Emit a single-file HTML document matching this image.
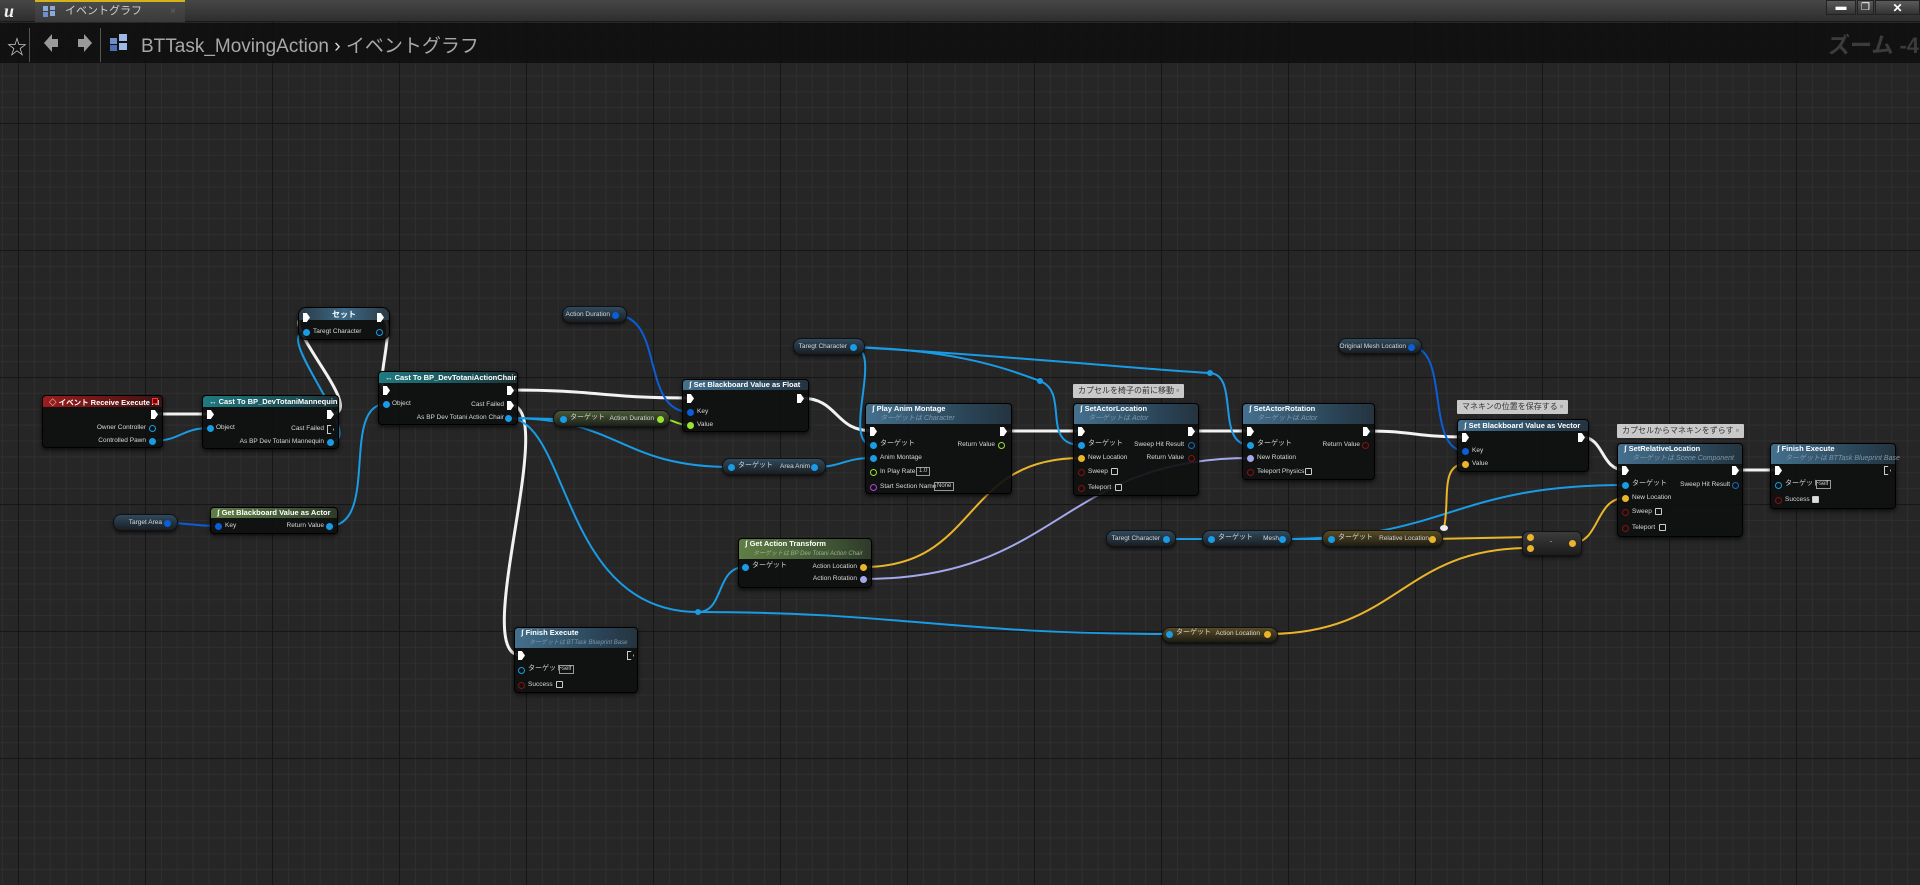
<!DOCTYPE html>
<html><head><meta charset="utf-8">
<style>
*{margin:0;padding:0;box-sizing:border-box}
body{width:1920px;height:885px;overflow:hidden;background:#262626;font-family:"Liberation Sans","Noto Sans CJK JP",sans-serif;position:relative;color:#ddd}
#grid{position:absolute;left:0;top:0;width:1920px;height:885px;
background-image:
linear-gradient(to right,#161616 1px,transparent 1px),
linear-gradient(to bottom,#161616 1px,transparent 1px),
linear-gradient(to right,#2f2f2f 1px,transparent 1px),
linear-gradient(to bottom,#2f2f2f 1px,transparent 1px);
background-size:127px 127px,127px 127px,15.875px 15.875px,15.875px 15.875px;
background-position:18px 123px,18px 123px,18px 123px,18px 123px}
#tabbar{position:absolute;left:0;top:0;width:1920px;height:22px;background:linear-gradient(#474747,#2e2e2e);border-bottom:1px solid #1a1a1a}
#tab{position:absolute;left:35px;top:0;width:150px;height:22px;background:linear-gradient(#4a4a4a,#3a3a3a);border-top:2px solid #d4b21a;color:#cfcfcf;font-size:11px;line-height:19px;padding-left:30px}
#toolbar{position:absolute;left:0;top:23px;width:1920px;height:40px;background:rgba(14,14,14,.85)}
.node{position:absolute;background:rgba(14,16,16,.92);border:1px solid #000;border-radius:4px;box-shadow:0 2px 4px rgba(0,0,0,.7)}
.hd{position:absolute;left:0;top:0;right:0;border-radius:3px 3px 0 0;color:#fff;font-size:8px;font-weight:bold;padding:2px 0 0 6px;white-space:nowrap}
.hb{background:linear-gradient(90deg,#44708e,#2a4456 70%,#24343f)}
.ht{background:linear-gradient(90deg,#1f7a80,#1b4c52 70%,#1d3033)}
.hr{background:linear-gradient(90deg,#9b1d1d,#5b1414 70%,#3a1414)}
.hg{background:linear-gradient(90deg,#5f7e45,#3e5434 70%,#2f3a2a)}
.sub{font-style:italic;font-weight:normal;color:#7d97aa;font-size:7px;padding-left:8px}
.pill{position:absolute;border-radius:8px;background:linear-gradient(#3c3c3c,#1c1c1c);border:1px solid #111;box-shadow:0 2px 3px rgba(0,0,0,.6)}
.pb{background:linear-gradient(#2f4a5e,#1a1e22)}
.pg{background:linear-gradient(#4a5a38,#1c2018)}
.py{background:linear-gradient(#5a4d24,#1e1c16)}
.l{position:absolute;font-size:6.5px;color:#d8d8d8;white-space:nowrap;line-height:8px}
.r{text-align:right}
.d{position:absolute;width:7px;height:7px;border-radius:50%}
.h{position:absolute;width:7px;height:7px;border-radius:50%;border:1.5px solid}
.x{position:absolute;width:7px;height:9px;background:#fff;clip-path:polygon(0 0,55% 0,100% 50%,55% 100%,0 100%)}
.xo{position:absolute;width:7px;height:9px;border:1px solid #ccc;clip-path:polygon(0 0,55% 0,100% 50%,55% 100%,0 100%);background:transparent}
.cb{position:absolute;width:7px;height:7px;border:1px solid #ccc;border-radius:1px}
.in{position:absolute;height:9px;border:1px solid #999;font-size:6px;color:#ccc;padding:0 2px;line-height:7px}
.cm{position:absolute;background:#c9c9c9;color:#333;font-size:8px;padding:1px 5px;height:14px;line-height:12px;border-radius:1px;white-space:nowrap}
</style></head><body>
<div id="grid"></div>

<svg style="position:absolute;left:0;top:0" width="1920" height="885" fill="none" stroke-linecap="round">
<g stroke="#f2f2f2" stroke-width="3">
<path d="M155,414 L210,414"/>
<path d="M330,414 C372,414 272,317 306,317"/>
<path d="M380,317 C400,317 372,390 386,390"/>
<path d="M510,390 C600,390 600,398 690,398"/>
<path d="M510,405 C560,405 470,655 520,655"/>
<path d="M800,398 C840,398 833,431 873,431"/>
<path d="M1003,431 L1081,431"/>
<path d="M1191,431 L1250,431"/>
<path d="M1366,431 C1415,431 1415,437 1465,437"/>
<path d="M1581,437 C1605,437 1600,470 1625,470"/>
<path d="M1735,470 L1778,470"/>
</g>
<g stroke="#1a9be6" stroke-width="2">
<path d="M152,441 C181,441 181,428 210,428"/>
<path d="M330,442 C370,442 270,332 306,332"/>
<path d="M329,526 C380,526 340,404 386,404"/>
<path d="M508,418 C535,418 536,419 563,419"/>
<path d="M508,418 C620,418 620,467 731,467"/>
<path d="M508,418 C570,418 560,612 698,612"/>
<path d="M698,612 C725,612 715,567 745,567"/>
<path d="M698,612 C900,612 950,634 1169,634"/>
<path d="M853,347 C885,347 840,445 873,445"/>
<path d="M853,347 C960,350 1010,370 1040,381 C1070,392 1040,445 1081,445"/>
<path d="M853,347 C1000,355 1150,370 1210,373 C1240,375 1215,445 1250,445"/>
<path d="M814,467 C843,467 843,458 873,458"/>
<path d="M1166,539 L1211,539"/>
<path d="M1282,539 L1331,539"/>
<path d="M1282,539 C1450,539 1450,485 1625,485"/>
</g>
<g stroke="#0b5ed8" stroke-width="2">
<path d="M167,523 C192,523 192,526 218,526"/>
<path d="M615,315 C665,315 640,412 690,412"/>
<path d="M1411,347 C1450,347 1425,451 1465,451"/>
</g>
<path stroke="#9be130" stroke-width="2" d="M660,419 C675,419 675,425 690,425"/>
<g stroke="#eab52a" stroke-width="2">
<path d="M863,567 C980,567 960,458 1081,458"/>
<path d="M1432,539 L1530,537"/>
<path d="M1444,528 C1450,500 1440,464 1465,464"/>
<path d="M1267,634 C1400,634 1400,548 1530,548"/>
<path d="M1572,543 C1600,543 1595,498 1625,498"/>
</g>
<path stroke="#a4a8ec" stroke-width="2" d="M863,579 C1060,579 1060,458 1250,458"/>
<circle cx="698" cy="612" r="3" fill="#1a9be6"/>
<circle cx="1040" cy="381" r="3" fill="#1a9be6"/>
<circle cx="1210" cy="373" r="3" fill="#1a9be6"/>
<ellipse cx="1444" cy="528" rx="4" ry="3" fill="#eee"/>
</svg>

<!-- top bars -->
<div id="tabbar"></div>
<div style="position:absolute;left:4px;top:1px;font:bold italic 18px 'Liberation Serif',serif;color:#eee">u</div>
<div id="tab"><svg style="position:absolute;left:8px;top:4px" width="14" height="12"><rect x="0" y="0" width="5" height="5" fill="#8aa8d8"/><rect x="7" y="0" width="5" height="4" fill="#8aa8d8"/><rect x="0" y="6" width="5" height="5" fill="#6f8fcb"/><rect x="7" y="5" width="5" height="5" fill="#8aa8d8"/></svg>イベントグラフ<span style="position:absolute;left:135px;color:#666;font-size:10px">×</span></div>
<div style="position:absolute;left:1826px;top:0;width:30px;height:15px;background:linear-gradient(#5a5a5a,#333);border:1px solid #222;color:#fff;font-size:11px;text-align:center;line-height:12px">▬</div>
<div style="position:absolute;left:1857px;top:0;width:17px;height:15px;background:linear-gradient(#5a5a5a,#333);border:1px solid #222;color:#fff;font-size:10px;text-align:center;line-height:13px">❐</div>
<div style="position:absolute;left:1875px;top:0;width:45px;height:15px;background:linear-gradient(#5a5a5a,#333);border:1px solid #222;color:#fff;font-size:12px;font-weight:bold;text-align:center;line-height:14px">✕</div>
<div id="toolbar"></div>
<div style="position:absolute;left:7px;top:31px;font-size:20px;color:#ccc">☆</div>
<div style="position:absolute;left:29px;top:28px;width:1px;height:34px;background:#555"></div>
<svg style="position:absolute;left:44px;top:34px" width="60" height="20"><path d="M0,9 L8,0 L8,5 L14,5 L14,13 L8,13 L8,18 Z" fill="#9a9a9a"/><path d="M48,9 L40,0 L40,5 L34,5 L34,13 L40,13 L40,18 Z" fill="#9a9a9a"/></svg>
<div style="position:absolute;left:100px;top:28px;width:1px;height:34px;background:#555"></div>
<svg style="position:absolute;left:110px;top:34px" width="20" height="17"><rect x="0" y="4" width="7" height="6" fill="#6f8fcb"/><rect x="9" y="0" width="8" height="7" fill="#9fb8e8"/><rect x="0" y="11" width="7" height="6" fill="#4d6fb8"/><rect x="9" y="9" width="8" height="7" fill="#9fb8e8"/></svg>
<div style="position:absolute;left:141px;top:31px;font-size:19px;color:#a8a8a8;white-space:nowrap">BTTask_MovingAction <span style="color:#ddd">›</span> イベントグラフ</div>
<div style="position:absolute;left:1828px;top:28px;font-size:22px;font-weight:bold;color:#3c3c3c;white-space:nowrap">ズーム -4</div>

<!-- Event node -->
<div class="node" style="left:42px;top:395px;width:121px;height:53px"><div class="hd hr" style="height:11px;font-size:7.5px;padding-top:1px">◇ イベント Receive Execute AI<span style="position:absolute;right:4px;top:2px;width:6px;height:6px;border:1px solid #f33;background:#600"></span></div></div>
<div class="x" style="left:151px;top:410px"></div>
<div class="l r" style="right:1774px;top:424px">Owner Controller</div><div class="h" style="left:149px;top:425px;border-color:#1a9be6"></div>
<div class="l r" style="right:1774px;top:437px">Controlled Pawn</div><div class="d" style="left:149px;top:438px;background:#1a9be6"></div>

<!-- Cast to mannequin -->
<div class="node" style="left:202px;top:395px;width:137px;height:54px"><div class="hd ht" style="height:11px;font-size:7.5px;padding-top:1px">↔ Cast To BP_DevTotaniMannequin</div></div>
<div class="x" style="left:207px;top:410px"></div><div class="x" style="left:327px;top:410px"></div>
<div class="d" style="left:207px;top:425px;background:#1a9be6"></div><div class="l" style="left:216px;top:424px">Object</div>
<div class="l r" style="right:1596px;top:425px">Cast Failed</div><div class="xo" style="left:327px;top:425px"></div>
<div class="l r" style="right:1596px;top:438px">As BP Dev Totani Mannequin</div><div class="d" style="left:327px;top:439px;background:#1a9be6"></div>

<!-- Set node -->
<div class="node" style="left:298px;top:307px;width:92px;height:33px;border-radius:8px"><div class="hd" style="height:12px;background:linear-gradient(90deg,#2a3a44,#3c6a88,#2a3a44);border-radius:7px 7px 0 0;text-align:center;padding:1px 0 0 0">セット</div></div>
<div class="x" style="left:303px;top:313px"></div><div class="x" style="left:377px;top:313px"></div>
<div class="d" style="left:303px;top:329px;background:#1a9be6"></div><div class="l" style="left:313px;top:328px">Taregt Character</div>
<div class="h" style="left:376px;top:329px;border-color:#1a9be6"></div>

<!-- Cast action chair -->
<div class="node" style="left:378px;top:371px;width:140px;height:54px"><div class="hd ht" style="height:11px;font-size:7.5px;padding-top:1px">↔ Cast To BP_DevTotaniActionChair</div></div>
<div class="x" style="left:383px;top:386px"></div><div class="x" style="left:507px;top:386px"></div>
<div class="d" style="left:383px;top:401px;background:#1a9be6"></div><div class="l" style="left:392px;top:400px">Object</div>
<div class="l r" style="right:1416px;top:401px">Cast Failed</div><div class="x" style="left:507px;top:401px"></div>
<div class="l r" style="right:1416px;top:414px">As BP Dev Totani Action Chair</div><div class="d" style="left:505px;top:415px;background:#1a9be6"></div>

<!-- Get BB actor -->
<div class="node" style="left:210px;top:507px;width:128px;height:27px"><div class="hd hg" style="height:10px;font-size:7.5px;padding-top:0">ʃ Get Blackboard Value as Actor</div></div>
<div class="d" style="left:215px;top:523px;background:#0b5ed8"></div><div class="l" style="left:225px;top:522px">Key</div>
<div class="l r" style="right:1596px;top:522px">Return Value</div><div class="d" style="left:326px;top:523px;background:#1a9be6"></div>

<div class="pill pb" style="left:113px;top:514px;width:65px;height:17px"></div><div class="l r" style="right:1758px;top:519px">Target Area</div><div class="d" style="left:164px;top:520px;background:#0b5ed8"></div>

<div class="pill pb" style="left:562px;top:306px;width:65px;height:17px"></div><div class="l r" style="right:1310px;top:311px">Action Duration</div><div class="d" style="left:612px;top:312px;background:#0b5ed8"></div>

<!-- SBB float -->
<div class="node" style="left:682px;top:379px;width:127px;height:53px"><div class="hd hb" style="height:10px;font-size:7.5px;padding-top:0">ʃ Set Blackboard Value as Float</div></div>
<div class="x" style="left:687px;top:394px"></div><div class="x" style="left:797px;top:394px"></div>
<div class="d" style="left:687px;top:409px;background:#0b5ed8"></div><div class="l" style="left:697px;top:408px">Key</div>
<div class="d" style="left:687px;top:422px;background:#9be130"></div><div class="l" style="left:697px;top:421px">Value</div>

<div class="pill pb" style="left:793px;top:338px;width:72px;height:17px"></div><div class="l r" style="right:1073px;top:343px">Taregt Character</div><div class="d" style="left:850px;top:344px;background:#1a9be6"></div>

<div class="pill pg" style="left:553px;top:410px;width:117px;height:17px"></div><div class="d" style="left:560px;top:416px;background:#1a9be6"></div><div class="l" style="left:570px;top:414px;font-size:7px">ターゲット</div><div class="l r" style="right:1266px;top:415px">Action Duration</div><div class="d" style="left:657px;top:416px;background:#9be130"></div>

<div class="pill pb" style="left:722px;top:458px;width:104px;height:17px"></div><div class="d" style="left:728px;top:464px;background:#1a9be6"></div><div class="l" style="left:738px;top:462px;font-size:7px">ターゲット</div><div class="l r" style="right:1110px;top:463px">Area Anim</div><div class="d" style="left:811px;top:464px;background:#1a9be6"></div>

<!-- Play anim montage -->
<div class="node" style="left:865px;top:403px;width:147px;height:91px"><div class="hd hb" style="height:20px;font-size:7.5px;padding-top:0">ʃ Play Anim Montage<br><span class="sub">ターゲットは Character</span></div></div>
<div class="x" style="left:870px;top:427px"></div><div class="x" style="left:1000px;top:427px"></div>
<div class="d" style="left:870px;top:442px;background:#1a9be6"></div><div class="l" style="left:880px;top:440px;font-size:7px">ターゲット</div>
<div class="l r" style="right:925px;top:441px">Return Value</div><div class="h" style="left:998px;top:442px;border-color:#9be130"></div>
<div class="d" style="left:870px;top:455px;background:#1a9be6"></div><div class="l" style="left:880px;top:454px">Anim Montage</div>
<div class="h" style="left:870px;top:469px;border-color:#9be130"></div><div class="l" style="left:880px;top:468px">In Play Rate</div><div class="in" style="left:916px;top:467px">1.0</div>
<div class="h" style="left:870px;top:484px;border-color:#b04ad8"></div><div class="l" style="left:880px;top:483px">Start Section Name</div><div class="in" style="left:934px;top:482px">None</div>

<!-- SetActorLocation -->
<div class="cm" style="left:1073px;top:384px">カプセルを椅子の前に移動 ▫</div>
<div class="node" style="left:1073px;top:403px;width:126px;height:93px"><div class="hd hb" style="height:20px;font-size:7.5px;padding-top:0">ʃ SetActorLocation<br><span class="sub">ターゲットは Actor</span></div></div>
<div class="x" style="left:1078px;top:427px"></div><div class="x" style="left:1188px;top:427px"></div>
<div class="d" style="left:1078px;top:442px;background:#1a9be6"></div><div class="l" style="left:1088px;top:440px;font-size:7px">ターゲット</div>
<div class="l r" style="right:736px;top:441px">Sweep Hit Result</div><div class="h" style="left:1188px;top:442px;border-color:#1a6ab8"></div>
<div class="d" style="left:1078px;top:455px;background:#eab52a"></div><div class="l" style="left:1088px;top:454px">New Location</div>
<div class="l r" style="right:736px;top:454px">Return Value</div><div class="h" style="left:1188px;top:455px;border-color:#8a1010"></div>
<div class="h" style="left:1078px;top:469px;border-color:#8a1010"></div><div class="l" style="left:1088px;top:468px">Sweep</div><div class="cb" style="left:1111px;top:468px"></div>
<div class="h" style="left:1078px;top:485px;border-color:#8a1010"></div><div class="l" style="left:1088px;top:484px">Teleport</div><div class="cb" style="left:1115px;top:484px"></div>

<!-- SetActorRotation -->
<div class="node" style="left:1242px;top:403px;width:133px;height:77px"><div class="hd hb" style="height:20px;font-size:7.5px;padding-top:0">ʃ SetActorRotation<br><span class="sub">ターゲットは Actor</span></div></div>
<div class="x" style="left:1247px;top:427px"></div><div class="x" style="left:1363px;top:427px"></div>
<div class="d" style="left:1247px;top:442px;background:#1a9be6"></div><div class="l" style="left:1257px;top:440px;font-size:7px">ターゲット</div>
<div class="l r" style="right:560px;top:441px">Return Value</div><div class="h" style="left:1362px;top:442px;border-color:#8a1010"></div>
<div class="d" style="left:1247px;top:455px;background:#a4a8ec"></div><div class="l" style="left:1257px;top:454px">New Rotation</div>
<div class="h" style="left:1247px;top:469px;border-color:#8a1010"></div><div class="l" style="left:1257px;top:468px">Teleport Physics</div><div class="cb" style="left:1305px;top:468px"></div>

<div class="pill pb" style="left:1338px;top:338px;width:84px;height:16px"></div><div class="l r" style="right:514px;top:343px">Original Mesh Location</div><div class="d" style="left:1408px;top:344px;background:#0b5ed8"></div>

<!-- SBB vector -->
<div class="cm" style="left:1457px;top:400px">マネキンの位置を保存する ▫</div>
<div class="node" style="left:1457px;top:419px;width:132px;height:53px"><div class="hd hb" style="height:11px;font-size:7.5px;padding-top:1px">ʃ Set Blackboard Value as Vector</div></div>
<div class="x" style="left:1462px;top:433px"></div><div class="x" style="left:1578px;top:433px"></div>
<div class="d" style="left:1462px;top:448px;background:#0b5ed8"></div><div class="l" style="left:1472px;top:447px">Key</div>
<div class="d" style="left:1462px;top:461px;background:#eab52a"></div><div class="l" style="left:1472px;top:460px">Value</div>

<!-- bottom pills -->
<div class="pill pb" style="left:1106px;top:530px;width:70px;height:17px"></div><div class="l r" style="right:760px;top:535px">Taregt Character</div><div class="d" style="left:1163px;top:536px;background:#1a9be6"></div>
<div class="pill pb" style="left:1202px;top:530px;width:90px;height:17px"></div><div class="d" style="left:1208px;top:536px;background:#1a9be6"></div><div class="l" style="left:1218px;top:534px;font-size:7px">ターゲット</div><div class="l r" style="right:641px;top:535px">Mesh</div><div class="d" style="left:1279px;top:536px;background:#1a9be6"></div>
<div class="pill py" style="left:1322px;top:530px;width:121px;height:17px"></div><div class="d" style="left:1328px;top:536px;background:#1a9be6"></div><div class="l" style="left:1338px;top:534px;font-size:7px">ターゲット</div><div class="l r" style="right:491px;top:535px">Relative Location</div><div class="d" style="left:1429px;top:536px;background:#eab52a"></div>

<div class="pill" style="left:1522px;top:531px;width:60px;height:25px;border-radius:6px"></div>
<div class="d" style="left:1527px;top:534px;background:#eab52a"></div><div class="d" style="left:1527px;top:545px;background:#eab52a"></div>
<div class="l" style="left:1550px;top:538px">-</div><div class="d" style="left:1569px;top:540px;background:#eab52a"></div>

<!-- SetRelativeLocation -->
<div class="cm" style="left:1617px;top:424px">カプセルからマネキンをずらす ▫</div>
<div class="node" style="left:1617px;top:443px;width:126px;height:94px"><div class="hd hb" style="height:20px;font-size:7.5px;padding-top:0">ʃ SetRelativeLocation<br><span class="sub">ターゲットは Scene Component</span></div></div>
<div class="x" style="left:1622px;top:466px"></div><div class="x" style="left:1732px;top:466px"></div>
<div class="d" style="left:1622px;top:482px;background:#1a9be6"></div><div class="l" style="left:1632px;top:480px;font-size:7px">ターゲット</div>
<div class="l r" style="right:190px;top:481px">Sweep Hit Result</div><div class="h" style="left:1732px;top:482px;border-color:#1a6ab8"></div>
<div class="d" style="left:1622px;top:495px;background:#eab52a"></div><div class="l" style="left:1632px;top:494px">New Location</div>
<div class="h" style="left:1622px;top:509px;border-color:#8a1010"></div><div class="l" style="left:1632px;top:508px">Sweep</div><div class="cb" style="left:1655px;top:508px"></div>
<div class="h" style="left:1622px;top:525px;border-color:#8a1010"></div><div class="l" style="left:1632px;top:524px">Teleport</div><div class="cb" style="left:1659px;top:524px"></div>

<!-- Finish right -->
<div class="node" style="left:1770px;top:443px;width:126px;height:66px"><div class="hd hb" style="height:20px;font-size:7.5px;padding-top:0">ʃ Finish Execute<br><span class="sub">ターゲットは BTTask Blueprint Base</span></div></div>
<div class="x" style="left:1775px;top:466px"></div><div class="xo" style="left:1884px;top:466px"></div>
<div class="h" style="left:1775px;top:482px;border-color:#1a9be6"></div><div class="l" style="left:1785px;top:480px;font-size:7px">ターゲット</div><div class="in" style="left:1816px;top:480px">self</div>
<div class="h" style="left:1775px;top:497px;border-color:#8a1010"></div><div class="l" style="left:1785px;top:496px">Success</div><div class="cb" style="left:1812px;top:496px;background:#ddd"></div>

<!-- Get Action Transform -->
<div class="node" style="left:738px;top:538px;width:134px;height:50px"><div class="hd hg" style="height:20px;font-size:7.5px;padding-top:0">ʃ Get Action Transform<br><span class="sub" style="color:#9ab08a;font-size:6px">ターゲットは BP Dev Totani Action Chair</span></div></div>
<div class="d" style="left:742px;top:564px;background:#1a9be6"></div><div class="l" style="left:752px;top:562px;font-size:7px">ターゲット</div>
<div class="l r" style="right:1063px;top:563px">Action Location</div><div class="d" style="left:860px;top:564px;background:#eab52a"></div>
<div class="l r" style="right:1063px;top:575px">Action Rotation</div><div class="d" style="left:860px;top:576px;background:#a4a8ec"></div>

<!-- Finish left -->
<div class="node" style="left:514px;top:627px;width:124px;height:66px"><div class="hd hb" style="height:20px;font-size:7.5px;padding-top:0">ʃ Finish Execute<br><span class="sub" style="font-size:6px">ターゲットは BTTask Blueprint Base</span></div></div>
<div class="x" style="left:518px;top:651px"></div><div class="xo" style="left:627px;top:651px"></div>
<div class="h" style="left:518px;top:667px;border-color:#1a9be6"></div><div class="l" style="left:528px;top:665px;font-size:7px">ターゲット</div><div class="in" style="left:559px;top:665px">self</div>
<div class="h" style="left:518px;top:682px;border-color:#8a1010"></div><div class="l" style="left:528px;top:681px">Success</div><div class="cb" style="left:556px;top:681px"></div>

<div class="pill py" style="left:1162px;top:627px;width:116px;height:16px"></div><div class="d" style="left:1166px;top:631px;background:#1a9be6"></div><div class="l" style="left:1176px;top:629px;font-size:7px">ターゲット</div><div class="l r" style="right:660px;top:630px">Action Location</div><div class="d" style="left:1264px;top:631px;background:#eab52a"></div>
</body></html>
